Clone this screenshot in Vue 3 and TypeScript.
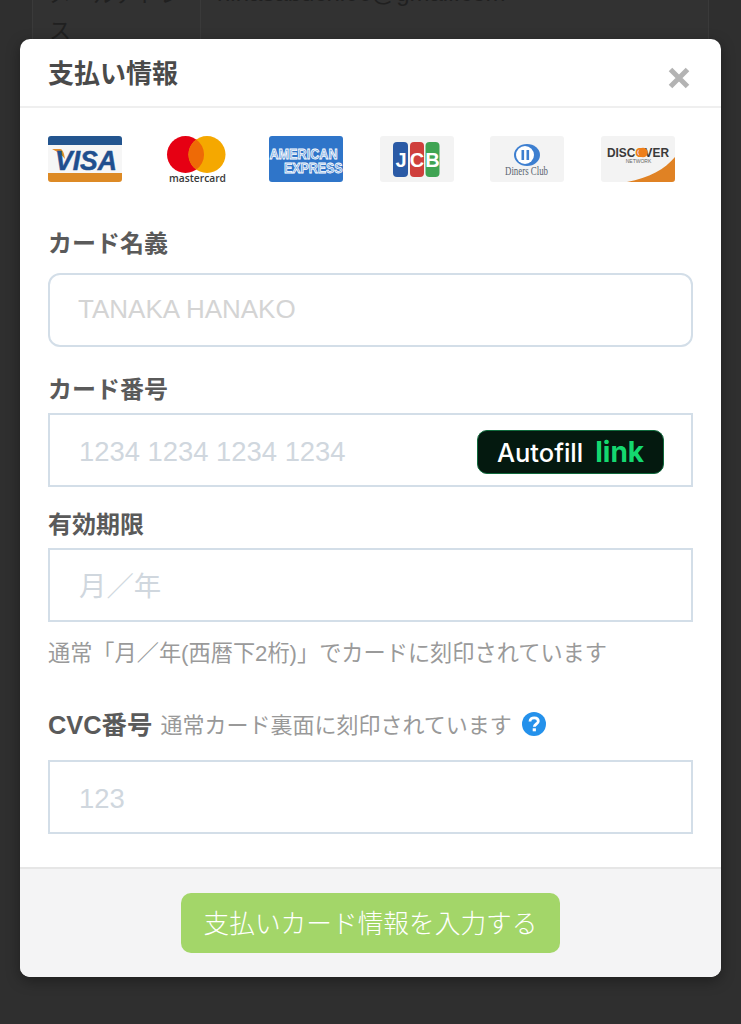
<script setup lang="ts">
const cards = ['visa', 'mc', 'amex', 'jcb', 'diners', 'discover']
</script>

<template>
  <div class="page">
    <div class="backdrop-table">
      <div class="bg-row">
        <div class="bg-th">メールアドレス</div>
        <div class="bg-td">hinasabuchi00@gmail.com</div>
      </div>
    </div>

    <section class="modal">
      <header class="modal-head">
        <h2 class="modal-title">支払い情報</h2>
        <span class="close">
          <svg viewBox="0 0 22 22" width="22" height="22">
            <path d="M2.500 2.500 L19.500 19.500 M19.500 2.500 L2.500 19.500" stroke="#b3b3b3" stroke-width="5" fill="none" />
          </svg>
        </span>
      </header>

      <div class="modal-body">
        <div class="brands">
          <div v-for="c in cards" :key="c" class="brand">
            <svg v-if="c === 'visa'" viewBox="0 0 74 46" width="74" height="46">
              <rect width="74" height="46" rx="3" fill="#f6f6f6" />
              <path d="M0 9 V3 a3 3 0 0 1 3-3 H71 a3 3 0 0 1 3 3 V9 Z" fill="#23558f" />
              <path d="M0 37 H74 V43 a3 3 0 0 1-3 3 H3 a3 3 0 0 1-3-3 Z" fill="#dd8a25" />
              <path d="M4 13 H12 C14 13 15 15 16 18 L17 23 C14 19 10 16 4 13 Z" fill="#e08d2b" />
              <text x="38" y="34" class="t-visa" textLength="62" lengthAdjust="spacingAndGlyphs">VISA</text>
            </svg>

            <svg v-else-if="c === 'mc'" viewBox="0 0 74 46" width="74" height="46">
              <circle cx="26.500" cy="18.500" r="18.500" fill="#e60013" />
              <circle cx="48" cy="18.500" r="18.500" fill="#f5a800" />
              <path d="M37.250 3.400 a18.500 18.500 0 0 1 0 30.200 a18.500 18.500 0 0 1 0-30.200 Z" fill="#ee6a06" />
              <text x="38.500" y="46" class="t-mc" textLength="57" lengthAdjust="spacingAndGlyphs">mastercard</text>
            </svg>

            <svg v-else-if="c === 'amex'" viewBox="0 0 74 46" width="74" height="46">
              <rect width="74" height="46" rx="3" fill="#2f75c9" />
              <text x="0.500" y="23" class="t-amex" textLength="68" lengthAdjust="spacingAndGlyphs">AMERICAN</text>
              <text x="15" y="37" class="t-amex" textLength="58.500" lengthAdjust="spacingAndGlyphs">EXPRESS</text>
            </svg>

            <svg v-else-if="c === 'jcb'" viewBox="0 0 74 46" width="74" height="46">
              <rect width="74" height="46" rx="3" fill="#f3f3f3" />
              <rect x="13" y="6" width="15" height="35" rx="4" fill="#2a5aa6" />
              <rect x="30" y="6" width="14" height="35" rx="4" fill="#cf3f3c" />
              <rect x="45.500" y="6" width="14" height="35" rx="4" fill="#3fa453" />
              <text x="21" y="31" class="t-jcb">J</text>
              <text x="37" y="31" class="t-jcb">C</text>
              <text x="52.500" y="31" class="t-jcb">B</text>
            </svg>

            <svg v-else-if="c === 'diners'" viewBox="0 0 74 46" width="74" height="46">
              <rect width="74" height="46" rx="3" fill="#f3f3f3" />
              <ellipse cx="37" cy="19" rx="13" ry="11" fill="#3d7fd0" />
              <circle cx="35" cy="19" r="9" fill="#ffffff" />
              <rect x="31.500" y="14" width="2.600" height="10" fill="#3d7fd0" />
              <rect x="36.500" y="14" width="2.600" height="10" fill="#3d7fd0" />
              <text x="36.500" y="39" class="t-diners" textLength="43" lengthAdjust="spacingAndGlyphs">Diners Club</text>
            </svg>

            <svg v-else viewBox="0 0 74 46" width="74" height="46">
              <rect width="74" height="46" rx="3" fill="#f3f3f3" />
              <path d="M74 21 V43 a3 3 0 0 1-3 3 H26 C48 42 64 33 74 21 Z" fill="#e08224" />
              <text x="6" y="21" class="t-disc" textLength="62" lengthAdjust="spacingAndGlyphs">DISC<tspan fill="#ee7f1a">O</tspan>VER</text>
              <circle cx="42" cy="16.500" r="4.800" fill="#ee7f1a" />
              <text x="37.500" y="27" class="t-net">NETWORK</text>
            </svg>
          </div>
        </div>

        <label class="field first">
          <span class="label">カード名義</span>
          <input class="input rounded" placeholder="TANAKA HANAKO" />
        </label>

        <div class="field number">
          <span class="label">カード番号</span>
          <div class="input-wrap">
            <input class="input" placeholder="1234 1234 1234 1234" />
            <span class="autofill">Autofill<b>link</b></span>
          </div>
        </div>

        <label class="field expiry">
          <span class="label">有効期限</span>
          <input class="input" placeholder="月／年" />
        </label>
        <p class="hint">通常「月／年(西暦下2桁)」でカードに刻印されています</p>

        <label class="field cvc">
          <span class="label-row">
            <span class="label cvc-label">CVC番号</span>
            <span class="sub">通常カード裏面に刻印されています</span>
            <svg class="help" viewBox="0 0 24 24" width="24" height="24">
              <circle cx="12" cy="12" r="12" fill="#2491eb" />
              <path d="M8 9.500 C8 7 10 5.800 12.200 5.800 C14.600 5.800 16.300 7.200 16.300 9.200 C16.300 12 12.300 12 12.300 14.800" fill="none" stroke="#fff" stroke-width="2.800" />
              <rect x="10.700" y="16.300" width="3.200" height="3" fill="#fff" />
            </svg>
          </span>
          <input class="input" placeholder="123" />
        </label>
      </div>

      <footer class="modal-foot">
        <button class="submit" type="button">支払いカード情報を入力する</button>
      </footer>
    </section>
  </div>
</template>

<style>
html, body { margin: 0; background: #2f2f2f; }
</style>

<style scoped>
.page {
  position: relative;
  width: 741px;
  height: 1024px;
  overflow: hidden;
  background: #2f2f2f;
  font-family: "Liberation Sans", "Noto Sans CJK JP", sans-serif;
}
.backdrop-table { margin: -23px 32px 0; border-left: 1px solid #3a3a3a; border-right: 1px solid #3a3a3a; background: #323232; }
.bg-row { display: flex; height: 130px; color: #202020; line-height: 36px; }
.bg-th { box-sizing: border-box; width: 168px; padding: 0 16px; font-size: 22px; border-right: 1px solid #3a3a3a; }
.bg-td { padding-left: 16px; font-size: 24px; margin-top: -2px; }

.modal {
  position: absolute;
  left: 20px;
  top: 39px;
  width: 701px;
  height: 938px;
  display: flex;
  flex-direction: column;
  background: #fff;
  border-radius: 10px;
  overflow: hidden;
  box-shadow: 0 4px 14px rgba(0, 0, 0, 0.35);
}
.modal-head {
  flex: none;
  height: 69px;
  box-sizing: border-box;
  display: flex;
  justify-content: space-between;
  padding: 16px 31px 0 28px;
  border-bottom: 2px solid #efefef;
}
.modal-title { margin: 0; font-size: 26px; line-height: 38px; font-weight: 700; color: #4a4a4a; }
.close { margin-top: 12px; height: 22px; }
.close svg { display: block; }

.modal-body { flex: 1; padding: 28px 28px 0; }
.brands { display: flex; gap: 36.600px; height: 47px; }
.brand { width: 74px; height: 46px; flex: none; }
.brand svg { display: block; overflow: visible; }
.t-visa { font: italic 700 28px "Liberation Sans", sans-serif; fill: #1f4f8e; stroke: #1f4f8e; stroke-width: 0.500px; text-anchor: middle; }
.t-mc { font: 600 11px "Open Sans", sans-serif; fill: #3a3a3a; text-anchor: middle; }
.t-amex { font: 700 14px "Liberation Sans", sans-serif; fill: #6d9fdc; stroke: #fff; stroke-width: 0.800px; }
.t-jcb { font: 700 20px "Liberation Sans", sans-serif; fill: #fff; text-anchor: middle; }
.t-diners { font: 400 11.500px "Liberation Serif", serif; fill: #5a6470; text-anchor: middle; }
.t-disc { font: 700 12.500px "Liberation Sans", sans-serif; fill: #3a3a3a; }
.t-net { font: 400 5px "Liberation Sans", sans-serif; fill: #666; text-anchor: middle; }

.field { display: block; }
.first { margin-top: 45px; }
.number { margin-top: 27px; }
.expiry { margin-top: 22px; }
.cvc { margin-top: 40px; }
.label { display: block; font-size: 24px; line-height: 32px; font-weight: 700; color: #5a5a5a; }
.cvc-label { font-size: 25.400px; }
.label-row { display: flex; align-items: center; gap: 8px; height: 32px; }
.sub { font-size: 22px; color: #999; margin-top: -5px; }
.help { flex: none; margin-top: -2px; margin-left: 2px; }
.input {
  display: block;
  box-sizing: border-box;
  width: 645px;
  height: 74px;
  margin-top: 7px;
  padding: 3px 29px 0;
  border: 2px solid #d3dee8;
  border-radius: 0;
  outline: none;
  background: #fff;
  font: 27.400px "Liberation Sans", "Noto Sans CJK JP", sans-serif;
  color: #333;
}
.cvc .input { margin-top: 19px; }
.input::placeholder { color: #d0d7de; opacity: 1; }
.rounded { border-radius: 12px; padding: 0 28px 1px; margin-top: 13px; font-size: 26px; }
.rounded::placeholder { color: #d4d4d4; }
.input-wrap { position: relative; }
.autofill {
  position: absolute;
  right: 29px;
  top: 17px;
  width: 187px;
  height: 44px;
  box-sizing: border-box;
  display: flex;
  align-items: center;
  justify-content: center;
  gap: 12px;
  border: 1px solid #0f6a3c;
  border-radius: 10px;
  background: #04190f;
  color: #fff;
  font: 500 25.500px Inter, "Noto Sans", sans-serif;
}
.autofill b { color: #14d86f; font-size: 28px; font-weight: 700; }
.hint { margin: 17px 0 0; font-size: 22.200px; line-height: 30px; color: #9a9a9a; }

.modal-foot {
  flex: none;
  height: 110px;
  box-sizing: border-box;
  display: flex;
  justify-content: center;
  padding-top: 24px;
  background: #f4f4f5;
  border-top: 2px solid #e6e6e6;
}
.submit {
  width: 379px;
  height: 60px;
  padding: 0 0 3px;
  border: 0;
  border-radius: 10px;
  background: #a3d669;
  color: #fff;
  font: 300 25.700px "Noto Sans CJK JP", sans-serif;
}
</style>
